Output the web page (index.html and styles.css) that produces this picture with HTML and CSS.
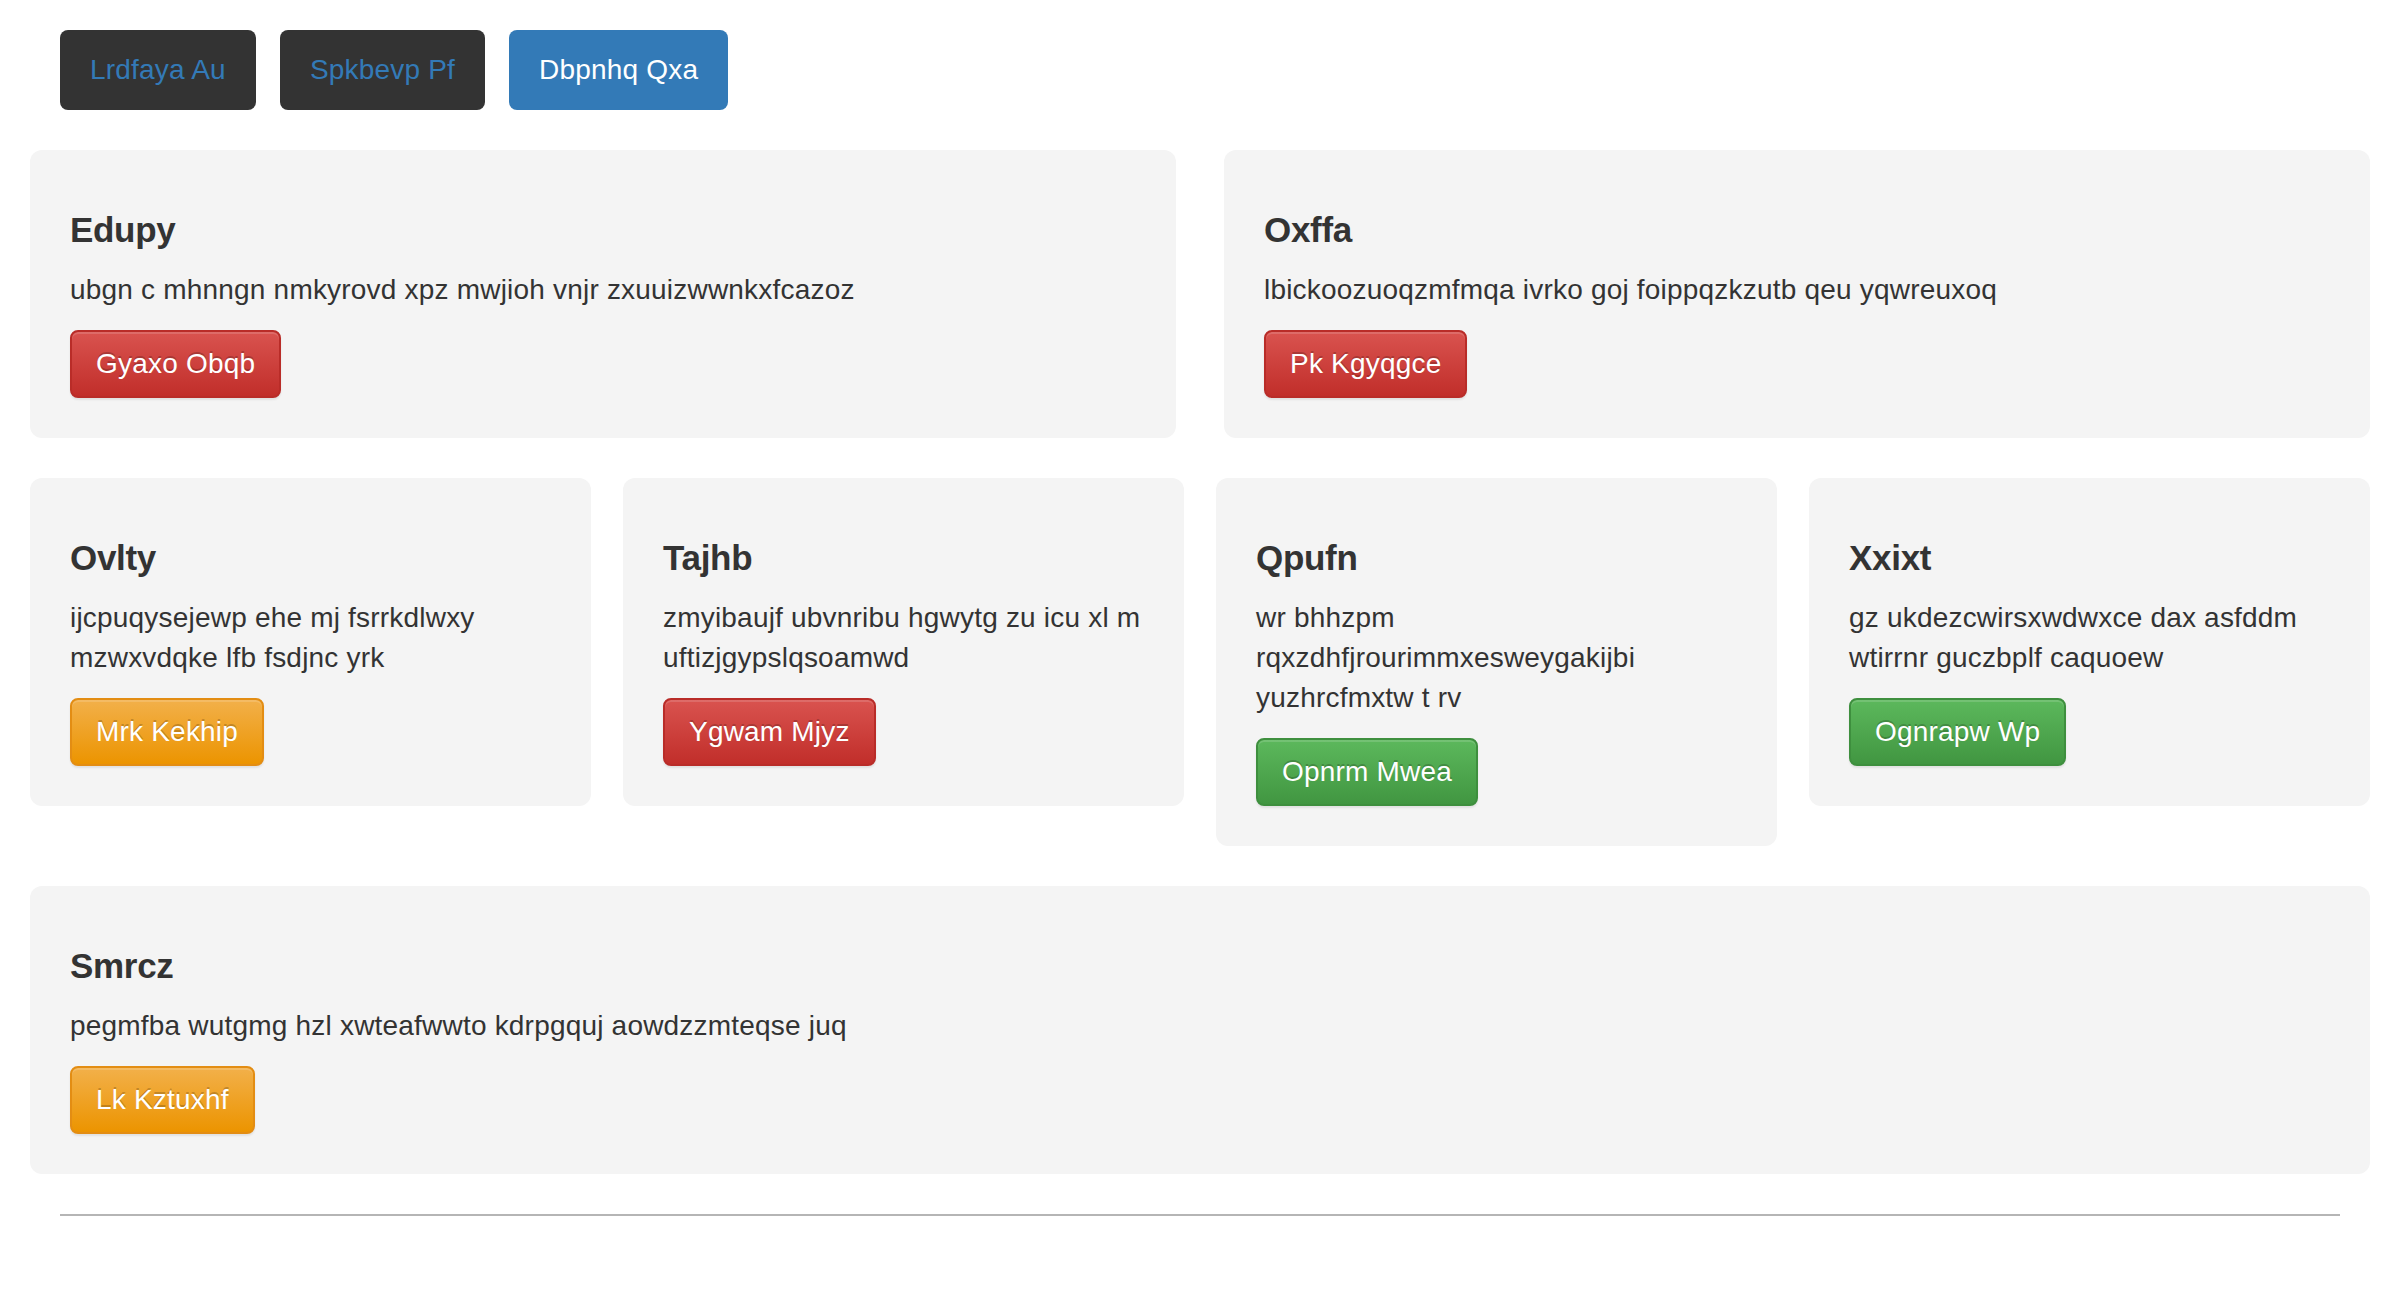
FILE: index.html
```html
<!DOCTYPE html>
<html lang="en">
<head>
    <meta charset="UTF-8">
    <meta name="viewport" content="width=device-width, initial-scale=1.0">
    <title>Panels</title>
    <link rel="stylesheet" href="styles.css">
</head>
<body>
    <div class="container">
        <ul class="pills">
            <li><a href="#">Lrdfaya Au</a></li>
            <li><a href="#">Spkbevp Pf</a></li>
            <li class="active"><a href="#">Dbpnhq Qxa</a></li>
        </ul>

        <div class="row row-2">
            <div class="well">
                <h4>Edupy</h4>
                <p>ubgn c mhnngn nmkyrovd xpz mwjioh vnjr zxuuizwwnkxfcazoz</p>
                <button class="btn btn-danger">Gyaxo Obqb</button>
            </div>
            <div class="well">
                <h4>Oxffa</h4>
                <p>lbickoozuoqzmfmqa ivrko goj foippqzkzutb qeu yqwreuxoq</p>
                <button class="btn btn-danger">Pk Kgyqgce</button>
            </div>
        </div>

        <div class="row row-4">
            <div class="well">
                <h4>Ovlty</h4>
                <p>ijcpuqysejewp ehe mj fsrrkdlwxy mzwxvdqke lfb fsdjnc yrk</p>
                <button class="btn btn-warning">Mrk Kekhip</button>
            </div>
            <div class="well">
                <h4>Tajhb</h4>
                <p>zmyibaujf ubvnribu hgwytg zu icu xl m uftizjgypslqsoamwd</p>
                <button class="btn btn-danger">Ygwam Mjyz</button>
            </div>
            <div class="well">
                <h4>Qpufn</h4>
                <p>wr bhhzpm rqxzdhfjrourimmxesweygakijbi yuzhrcfmxtw t rv</p>
                <button class="btn btn-success">Opnrm Mwea</button>
            </div>
            <div class="well">
                <h4>Xxixt</h4>
                <p>gz ukdezcwirsxwdwxce dax asfddm wtirrnr guczbplf caquoew</p>
                <button class="btn btn-success">Ognrapw Wp</button>
            </div>
        </div>

        <div class="row">
            <div class="well">
                <h4>Smrcz</h4>
                <p>pegmfba wutgmg hzl xwteafwwto kdrpgquj aowdzzmteqse juq</p>
                <button class="btn btn-warning">Lk Kztuxhf</button>
            </div>
        </div>

        <hr>
    </div>
</body>
</html>
```

FILE: styles.css
```css
body {
    margin: 0;
    font-family: "Liberation Sans", Arial, sans-serif;
    font-size: 28px;
    line-height: 40px;
    letter-spacing: 0.2px;
    color: #333;
    background-color: #fff;
}
.container {
    padding: 0 30px;
}
.pills {
    list-style: none;
    margin: 30px 0 40px;
    padding: 0 30px;
    display: flex;
    gap: 24px;
}
.pills a {
    display: block;
    padding: 20px 30px;
    line-height: 40px;
    border-radius: 8px;
    background-color: #333;
    color: #337ab7;
    text-decoration: none;
}
.pills .active a {
    background-color: #337ab7;
    color: #fff;
}
.row {
    display: grid;
    grid-template-columns: 1fr;
    align-items: start;
    margin-bottom: 40px;
}
.row-2 {
    grid-template-columns: repeat(2, 1fr);
    gap: 48px;
}
.row-4 {
    grid-template-columns: repeat(4, 1fr);
    gap: 32px;
}
.well {
    background-color: #f4f4f4;
    border-radius: 12px;
    padding: 40px;
}
.well h4 {
    margin: 20px 0;
    font-size: 35px;
    line-height: 40px;
    font-weight: bold;
    color: #333;
    letter-spacing: -0.3px;
}
.well p {
    margin: 0 0 20px;
}
.btn {
    font-family: inherit;
    font-size: 28px;
    line-height: 40px;
    letter-spacing: 0.2px;
    padding: 12px 24px;
    border: 2px solid transparent;
    border-radius: 8px;
    color: #fff;
    text-shadow: 0 -2px 0 rgba(0, 0, 0, 0.2);
    box-shadow: inset 0 2px 0 rgba(255, 255, 255, 0.15), 0 2px 2px rgba(0, 0, 0, 0.075);
    cursor: pointer;
}
.btn-danger {
    background-image: linear-gradient(to bottom, #d9534f 0%, #c12e2a 100%);
    border-color: #b92c28;
}
.btn-warning {
    background-image: linear-gradient(to bottom, #f2b04a 0%, #ec9400 100%);
    border-color: #e38d13;
}
.btn-success {
    background-image: linear-gradient(to bottom, #5cb85c 0%, #419641 100%);
    border-color: #3e8f3e;
}
hr {
    margin: 0 30px;
    border: 0;
    border-top: 2px solid #b5b5b5;
}
```
